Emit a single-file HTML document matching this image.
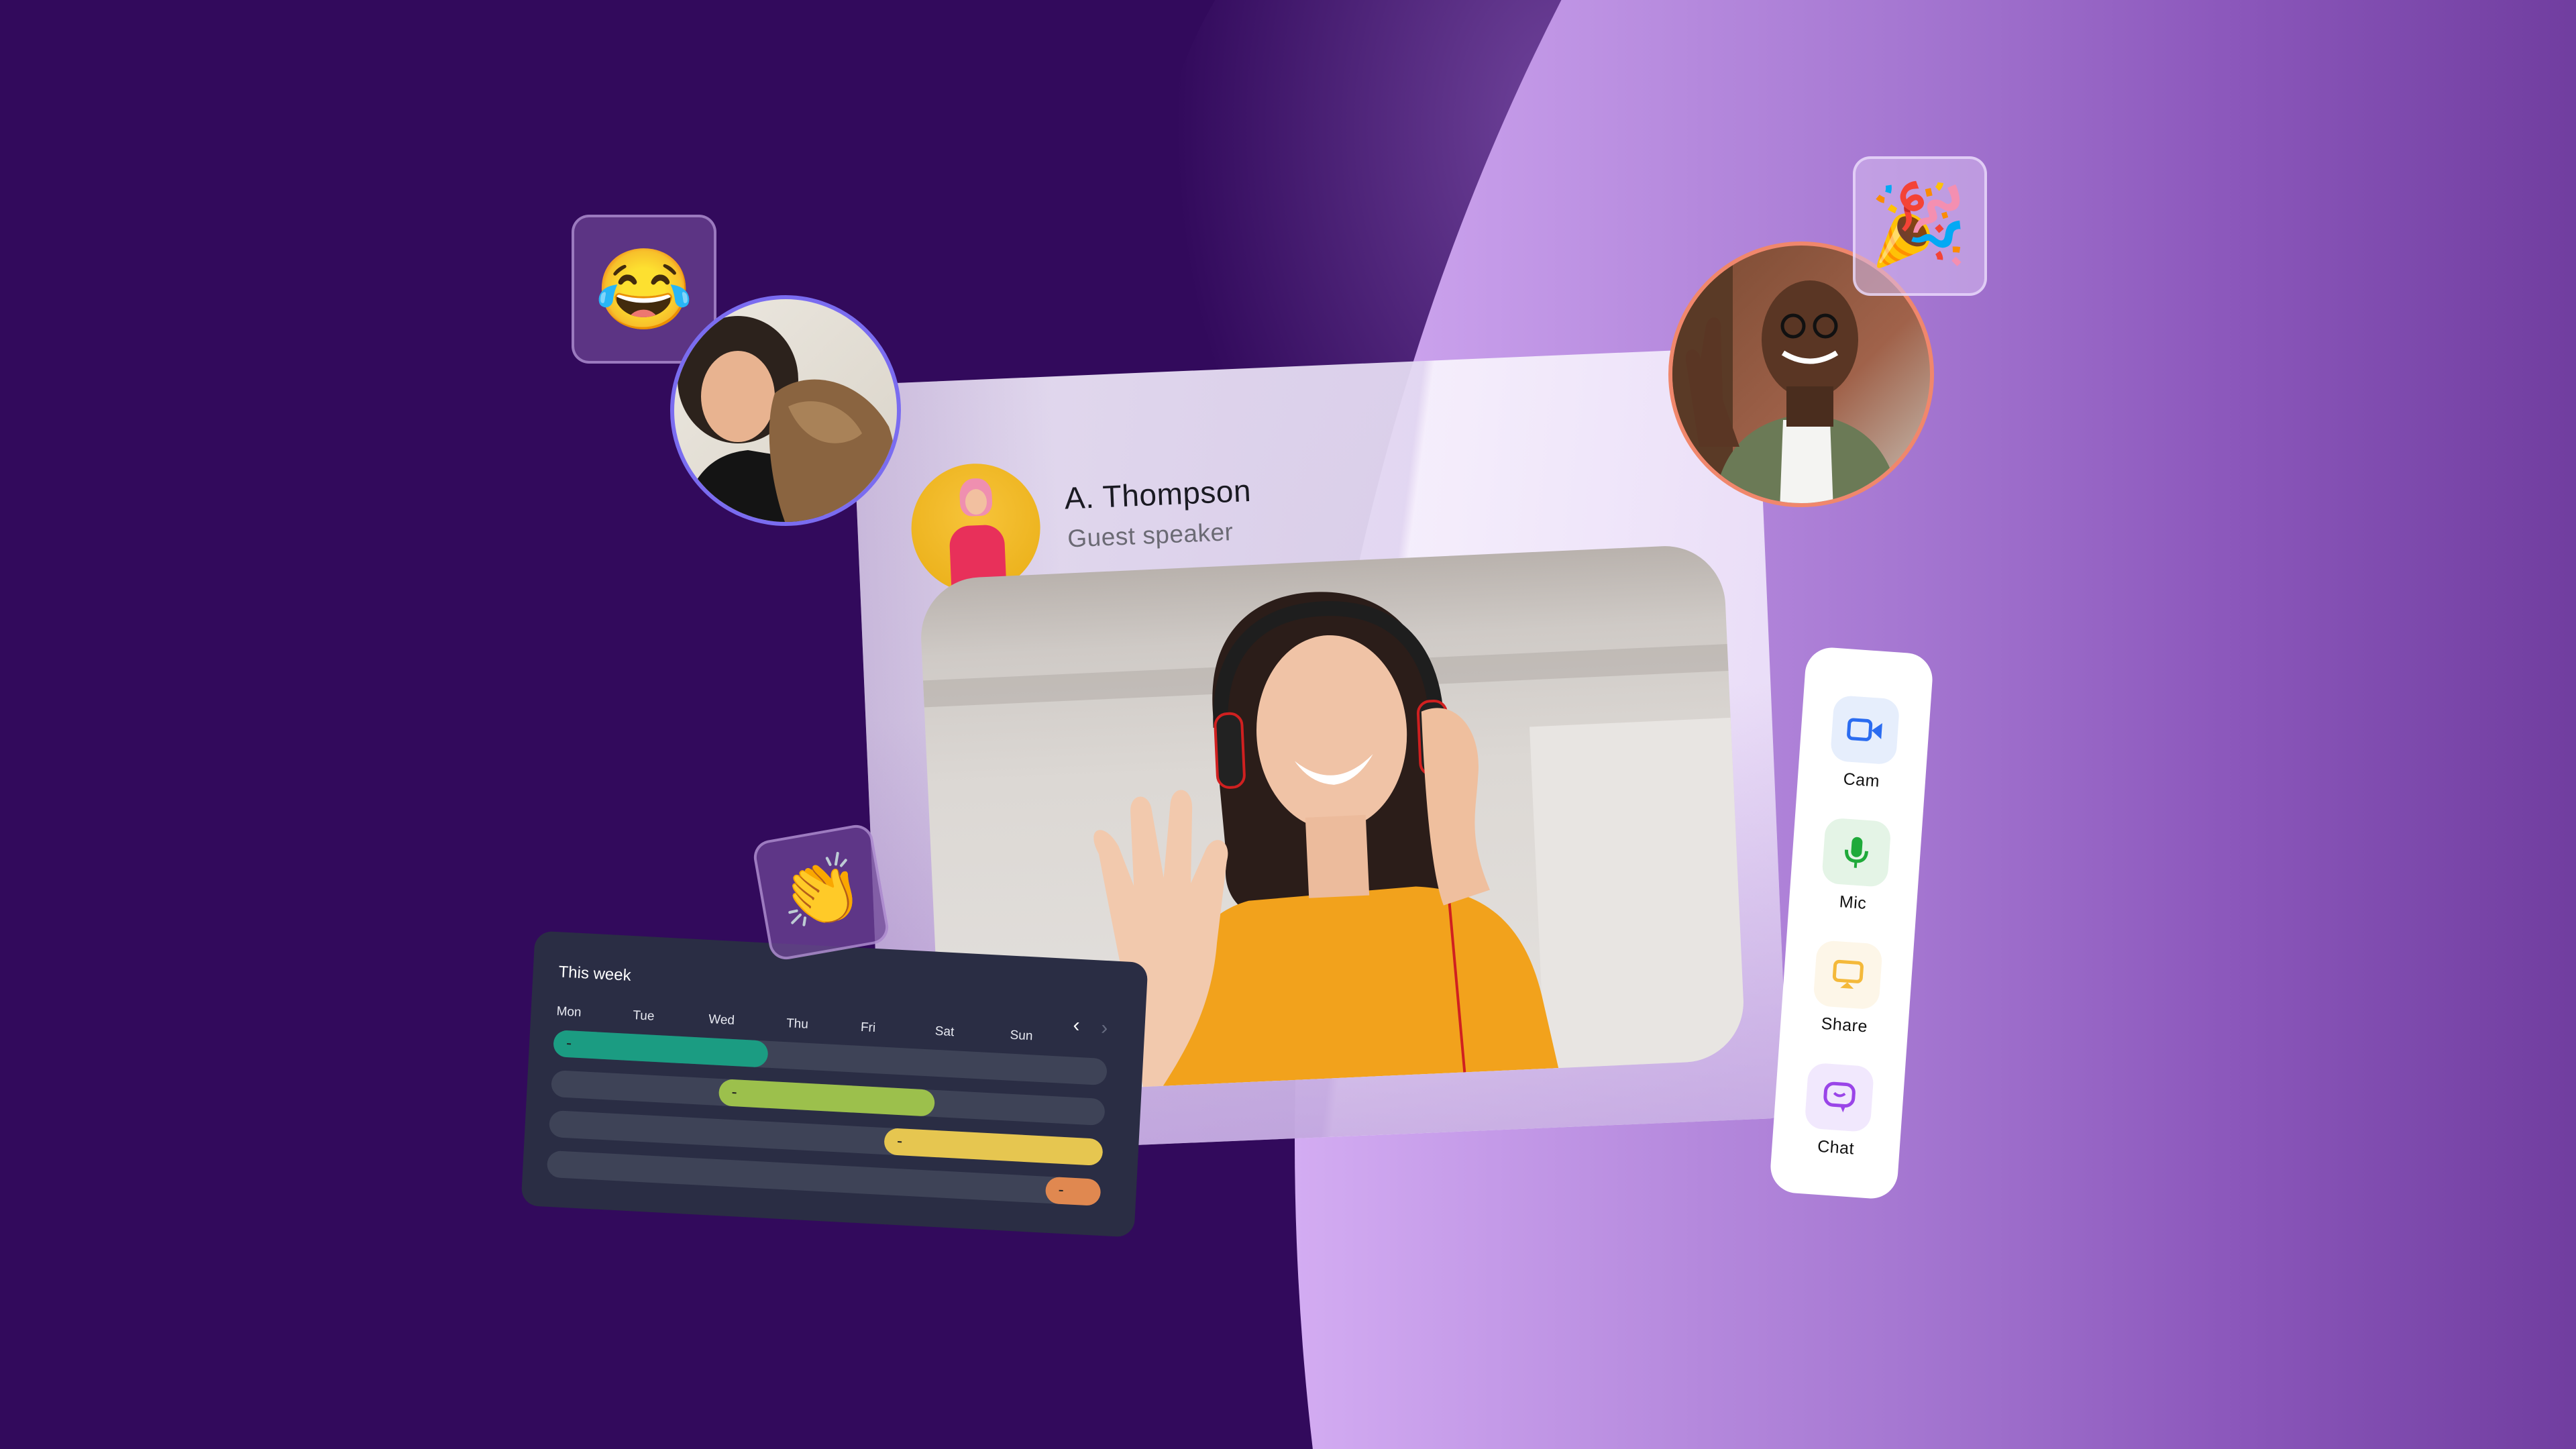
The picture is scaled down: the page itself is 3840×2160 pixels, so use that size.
<!DOCTYPE html>
<html><head><meta charset="utf-8"><style>
*{margin:0;padding:0;box-sizing:border-box}
html,body{width:3840px;height:2160px;overflow:hidden}
body{position:relative;background:#320a5c;font-family:"Liberation Sans",sans-serif}
.abs{position:absolute}
.c{position:absolute;transform:translate(-50%,-50%)}
#clip{position:absolute;left:0;top:0;width:3840px;height:2160px;overflow:hidden}
#blob{left:1930px;top:-1425px;width:4940px;height:6250px;border-radius:50%;
 background:linear-gradient(90deg,#d3acf2 0%,#c49ae8 6%,#a678d2 18%,#8c58bc 28%,#6d3a9c 40%)}
#glow{left:1700px;top:-200px;width:800px;height:1300px;border-radius:50%;background:radial-gradient(ellipse at 80% 30%,rgba(190,140,235,.45),rgba(120,60,170,0) 65%)}
.glass{background:rgba(140,100,180,.55);border:4px solid rgba(210,180,240,.55);border-radius:26px}
.label{font-size:25px;color:#111;text-align:center;letter-spacing:.5px}
.ib{width:98px;height:98px;border-radius:26px;margin:0 auto;display:flex;align-items:center;justify-content:center}
.day{position:absolute;top:108px;font-size:19px;color:#e8eaf2}
.track{position:absolute;left:36px;width:826px;height:40px;border-radius:20px;background:#3e4357}
.bar{position:absolute;height:40px;border-radius:20px}
.bar:before{content:"";position:absolute;left:20px;top:19px;width:6px;height:2px;background:#222}
</style></head><body>
<div id="clip">
<div id="glow" class="abs"></div>
<div id="blob" class="abs"></div>

<!-- main card -->
<div class="c" style="left:1968px;top:1120px;width:1350px;height:1150px;transform:translate(-50%,-50%) rotate(-2.4deg);border-radius:30px;
 background:linear-gradient(100deg,rgba(235,228,245,.96) 0%,rgba(228,218,242,.94) 55%,rgba(246,240,252,.97) 56%,rgba(238,228,250,.9) 100%);overflow:hidden">
 <div class="abs" style="left:0;top:500px;width:1350px;height:650px;background:linear-gradient(180deg,rgba(190,160,220,0),rgba(170,130,210,.55));"></div>
 <div class="abs" style="left:0;top:0;width:300px;height:1150px;background:linear-gradient(90deg,rgba(120,80,160,.25),rgba(120,80,160,0))"></div>
 <div class="abs" style="left:80px;top:125px;width:192px;height:192px;border-radius:50%;background:radial-gradient(circle at 50% 40%,#f7c43a,#e9ad14);overflow:hidden">
  <div class="abs" style="left:74px;top:22px;width:48px;height:56px;border-radius:45% 45% 35% 35%;background:#ef8fb0"></div>
  <div class="abs" style="left:82px;top:38px;width:32px;height:38px;border-radius:50%;background:#f2c0a0"></div>
  <div class="abs" style="left:56px;top:92px;width:82px;height:110px;border-radius:30px 30px 0 0;background:#e8305a"></div>
 </div>
 <div class="abs" style="left:310px;top:155px;font-size:46px;color:#1a1a22;letter-spacing:.5px">A. Thompson</div>
 <div class="abs" style="left:312px;top:222px;font-size:37px;color:#6b6a74;letter-spacing:.5px">Guest speaker</div>
</div>

<!-- video photo -->
<div class="c" style="left:1986px;top:1222px;width:1200px;height:770px;transform:translate(-50%,-50%) rotate(-2.6deg);border-radius:90px;overflow:hidden;
 background:linear-gradient(180deg,#b9b2ad 0%,#cfcac6 15%,#dcd8d4 40%,#e4e1de 100%)">
 <div class="abs" style="left:0;top:150px;width:1200px;height:40px;background:#a7a09b;opacity:.4"></div>
 <div class="abs" style="left:900px;top:260px;width:300px;height:510px;background:#e8e5e2"></div>
 <svg class="abs" style="left:0;top:0" width="1200" height="770" viewBox="0 0 1200 770">
  <path d="M430 230 C420 80 520 40 600 45 C700 50 760 120 760 230 L770 460 C760 520 720 540 690 530 L500 530 C450 520 430 480 440 440 Z" fill="#2b1d19"/>
  <path d="M330 770 C330 620 380 520 470 500 L720 490 C830 500 880 560 900 660 L920 770 Z" fill="#f2a21c"/>
  <ellipse cx="605" cy="255" rx="112" ry="145" fill="#f0c3a6"/>
  <rect x="560" y="380" width="90" height="120" fill="#ecbb9c"/>
  <path d="M548 295 Q605 345 665 290 Q640 330 605 333 Q570 330 548 295Z" fill="#fff"/>
  <path d="M440 240 C440 130 500 70 600 70 C700 70 760 130 762 240" fill="none" stroke="#1e1e1e" stroke-width="22"/>
  <rect x="432" y="220" width="40" height="110" rx="18" fill="#222" stroke="#d02020" stroke-width="4"/>
  <rect x="735" y="215" width="42" height="110" rx="18" fill="#222" stroke="#d02020" stroke-width="4"/>
  <path d="M760 320 L780 770" stroke="#d02020" stroke-width="4" fill="none"/>
  <path d="M740 230 C790 210 830 260 820 330 C815 380 800 420 830 500 L760 520 C740 460 740 300 740 230Z" fill="#efbf9e"/>
  <path d="M250 420 C230 380 260 370 280 410 L300 470 L300 360 C300 330 330 330 332 360 L345 460 L360 350 C365 320 395 325 392 360 L385 470 L410 420 C425 395 450 410 440 440 L420 560 C410 640 380 700 330 770 L300 770 C290 680 270 560 250 420Z" fill="#f2c9ad"/>
 </svg>
</div>

<div class="abs glass" style="left:852px;top:320px;width:216px;height:222px;background:rgba(110,70,150,.7)"></div>
<div class="c" style="left:960px;top:432px;font-size:118px;font-family:'Noto Color Emoji',sans-serif">😂</div>

<div class="c" style="left:1171px;top:612px;width:344px;height:344px;border-radius:50%;border:6px solid #7a6cf0;overflow:hidden;background:linear-gradient(135deg,#ece8e0,#d9d3c8)">
 <svg width="344" height="344" viewBox="0 0 344 344">
  <ellipse cx="95" cy="120" rx="90" ry="95" fill="#2c221c"/>
  <ellipse cx="95" cy="145" rx="55" ry="68" fill="#e8b390"/>
  <path d="M10 344 C20 260 60 230 110 225 L200 240 L230 344Z" fill="#141414"/>
  <path d="M150 140 C200 100 280 120 320 190 C340 250 330 300 300 344 L170 344 C150 300 130 200 150 140Z" fill="#8a6440"/>
  <path d="M170 160 C210 140 260 160 280 200 C260 220 200 230 170 160Z" fill="#a98258"/>
 </svg>
</div>

<div class="c" style="left:2685px;top:558px;width:396px;height:396px;border-radius:50%;border:6px solid #f0876c;overflow:hidden;background:linear-gradient(135deg,#7a4a32,#a0624a 60%,#c8c2b8)">
 <svg width="396" height="396" viewBox="0 0 396 396">
  <rect x="0" y="0" width="90" height="396" fill="#5a3a26"/>
  <path d="M60 396 C70 300 120 260 200 250 C280 260 330 300 340 396Z" fill="#6b7a56"/>
  <path d="M165 260 L235 260 L240 396 L160 396Z" fill="#f4f4f2"/>
  <ellipse cx="205" cy="140" rx="72" ry="88" fill="#5a3624"/>
  <rect x="170" y="210" width="70" height="60" fill="#4a2d1e"/>
  <path d="M165 160 Q205 185 245 160" stroke="#fff" stroke-width="8" fill="none"/>
  <circle cx="180" cy="120" r="16" fill="none" stroke="#111" stroke-width="5"/>
  <circle cx="228" cy="120" r="16" fill="none" stroke="#111" stroke-width="5"/>
  <path d="M40 300 L20 170 C18 150 40 150 42 170 L50 120 C55 100 75 105 72 125 L75 230 L100 300Z" fill="#5a3624"/>
 </svg>
</div>

<div class="abs glass" style="left:2762px;top:233px;width:200px;height:208px;background:rgba(215,190,240,.55);border-color:rgba(240,225,255,.7)"></div>
<div class="c" style="left:2860px;top:335px;font-size:118px;font-family:'Noto Color Emoji',sans-serif">🎉</div>

<div class="c" style="left:1244px;top:1616px;width:915px;height:410px;transform:translate(-50%,-50%) rotate(3deg);background:#2a2d44;border-radius:26px;overflow:hidden">
 <div class="abs" style="left:38px;top:46px;font-size:24px;color:#fff">This week</div>
 <div class="day" style="left:38px">Mon</div><div class="day" style="left:152px">Tue</div><div class="day" style="left:265px">Wed</div>
 <div class="day" style="left:381px">Thu</div><div class="day" style="left:492px">Fri</div><div class="day" style="left:603px">Sat</div><div class="day" style="left:715px">Sun</div>
 <div class="abs" style="left:808px;top:82px;font-size:30px;color:#fff">‹</div>
 <div class="abs" style="left:850px;top:84px;font-size:30px;color:#666b80">›</div>
 <div class="track" style="top:146px"></div><div class="bar" style="top:146px;left:36px;width:320px;background:#1b9c82"></div>
 <div class="track" style="top:206px"></div><div class="bar" style="top:206px;left:286px;width:322px;background:#9cc04c"></div>
 <div class="track" style="top:266px"></div><div class="bar" style="top:266px;left:536px;width:326px;background:#e6c650"></div>
 <div class="track" style="top:326px"></div><div class="bar" style="top:326px;left:780px;width:82px;background:#e08850"></div>
</div>

<div class="c glass" style="left:1224px;top:1330px;width:180px;height:180px;transform:translate(-50%,-50%) rotate(-10deg);background:rgba(110,70,150,.75);display:flex;align-items:center;justify-content:center">
 <span style="font-size:100px;font-family:'Noto Color Emoji',sans-serif">👏</span>
</div>

<div class="c" style="left:2760px;top:1376px;width:190px;height:815px;transform:translate(-50%,-50%) rotate(4deg);background:#fff;border-radius:40px;padding-top:70px">
 <div class="ib" style="background:#e6eefc"><svg width="54" height="40" viewBox="0 0 54 40"><rect x="3" y="6" width="32" height="28" rx="6" fill="none" stroke="#2b6cf0" stroke-width="5"/><path d="M37 20 L52 8 L52 32 Z" fill="#2b6cf0"/></svg></div>
 <div class="label" style="margin:12px 0 44px">Cam</div>
 <div class="ib" style="background:#e4f4e6"><svg width="40" height="50" viewBox="0 0 40 50"><rect x="12" y="2" width="16" height="30" rx="8" fill="#1faa3a"/><path d="M5 22 Q5 38 20 38 Q35 38 35 22" fill="none" stroke="#1faa3a" stroke-width="5"/><rect x="18" y="36" width="4" height="12" fill="#1faa3a"/></svg></div>
 <div class="label" style="margin:12px 0 44px">Mic</div>
 <div class="ib" style="background:#fdf6e8"><svg width="48" height="44" viewBox="0 0 48 44"><rect x="4" y="3" width="40" height="28" rx="6" fill="none" stroke="#f4b93a" stroke-width="5"/><path d="M14 42 L24 33 L34 42Z" fill="#f4b93a"/></svg></div>
 <div class="label" style="margin:12px 0 44px">Share</div>
 <div class="ib" style="background:#f1e8fd"><svg width="50" height="48" viewBox="0 0 50 48"><rect x="4" y="4" width="42" height="32" rx="12" fill="none" stroke="#9a45e8" stroke-width="5"/><path d="M17 18 Q25 25 33 18" fill="none" stroke="#9a45e8" stroke-width="4"/><path d="M26 34 L32 46 L36 34Z" fill="#9a45e8"/></svg></div>
 <div class="label" style="margin:12px 0 0">Chat</div>
</div>
</div>
</body></html>
